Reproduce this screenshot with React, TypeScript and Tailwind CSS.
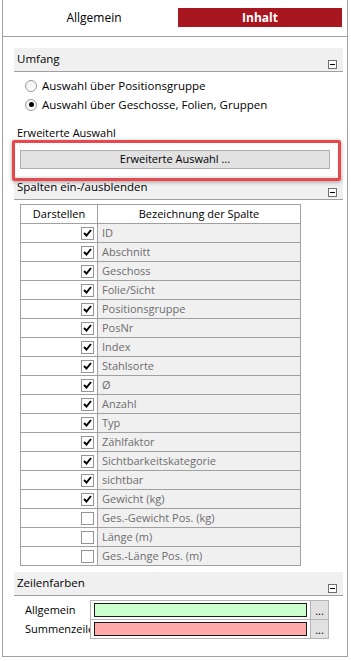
import React from 'react';

// Column list for the "Spalten ein-/ausblenden" grid
const columns: { label: string; on: boolean }[] = [
  { label: 'ID', on: true },
  { label: 'Abschnitt', on: true },
  { label: 'Geschoss', on: true },
  { label: 'Folie/Sicht', on: true },
  { label: 'Positionsgruppe', on: true },
  { label: 'PosNr', on: true },
  { label: 'Index', on: true },
  { label: 'Stahlsorte', on: true },
  { label: 'Ø', on: true },
  { label: 'Anzahl', on: true },
  { label: 'Typ', on: true },
  { label: 'Zählfaktor', on: true },
  { label: 'Sichtbarkeitskategorie', on: true },
  { label: 'sichtbar', on: true },
  { label: 'Gewicht (kg)', on: true },
  { label: 'Ges.-Gewicht Pos. (kg)', on: false },
  { label: 'Länge (m)', on: false },
  { label: 'Ges.-Länge Pos. (m)', on: false },
];

const MinusBox = () => (
  <div className="absolute right-[6px] bottom-[2px] w-[9px] h-[9px] border border-[#6e6e6e] bg-white flex items-center justify-center">
    <div className="w-[5px] h-px bg-black" />
  </div>
);

const SectionHeader = ({ title, className = '' }: { title: string; className?: string }) => (
  <div className={`relative w-[329px] h-[24px] bg-[#f0f0f0] border-b border-[#a0a0a0] flex items-center pl-[3px] text-black ${className}`}>
    <span className="-mt-[1px] text-[11.5px]">{title}</span>
    <MinusBox />
  </div>
);

const Radio = ({ checked, label }: { checked?: boolean; label: string }) => (
  <div className="h-[19px] flex items-center">
    <div className="ml-[11px] w-[12px] h-[12px] rounded-full border border-[#9a9a9a] bg-gradient-to-br from-[#f0f0f0] to-white flex items-center justify-center">
      {checked && <div className="w-[5px] h-[5px] rounded-full bg-black" />}
    </div>
    <span className="ml-[5px]">{label}</span>
  </div>
);

const CheckBox = ({ checked }: { checked: boolean }) => (
  <div className="w-[13px] h-[13px] border border-[#959595] bg-white flex items-center justify-center">
    {checked && (
      <svg width="9" height="8" viewBox="0 0 9 8">
        <path d="M1 4 L3.5 6.5 L8 1" stroke="#000" strokeWidth="1.9" fill="none" />
      </svg>
    )}
  </div>
);

const ColorRow = ({ label, color, first }: { label: string; color: string; first?: boolean }) => (
  <div className={`flex items-center ${first ? '' : '-mt-px'}`}>
    <div className="w-[70px] pl-[5px] overflow-hidden whitespace-nowrap">{label}</div>
    <div className="w-[221px] h-[20px] border border-[#b4b4b4] p-[2px] pl-[3px] pr-[3px] bg-white">
      <div className="w-full h-full border border-[#1a1a1a]" style={{ backgroundColor: color }} />
    </div>
    <div className="-ml-px w-[19px] h-[20px] border border-[#b4b4b4] bg-[#e1e1e1] flex items-end justify-center pb-[3px] text-[11px] leading-none">
      ...
    </div>
  </div>
);

export default function App() {
  return (
    <div className="relative w-[351px] h-[661px] bg-white font-['Open_Sans',sans-serif] text-[11px] text-black">
      <div className="ml-[2px] w-[346px] h-[657px] border-x border-b border-[#a0a0a0]">
        {/* Tabs */}
        <div className="h-[37px] border-b border-[#a0a0a0] flex gap-[2px] pl-[9px] pt-[8px]">
          <div className="w-[164px] h-[19px] flex items-center justify-center text-[12px]">Allgemein</div>
          <div className="w-[164px] h-[19px] bg-[#a8161f] flex items-center justify-center text-[12px] font-bold text-white">
            Inhalt
          </div>
        </div>

        <div className="pl-[11px]">
          {/* Umfang */}
          <SectionHeader title="Umfang" className="mt-[11px]" />
          <div className="mt-[4px] text-[11.5px]">
            <Radio label="Auswahl über Positionsgruppe" />
            <Radio checked label="Auswahl über Geschosse, Folien, Gruppen" />
          </div>

          {/* Erweiterte Auswahl */}
          <div className="mt-[10px] h-[18px] flex items-center pl-[3px]">Erweiterte Auswahl</div>
          <button className="mt-[8px] ml-[6px] w-[310px] h-[19px] bg-[#e1e1e1] border border-[#adadad] flex items-center justify-center">
            Erweiterte Auswahl ...
          </button>

          {/* Spalten */}
          <SectionHeader title="Spalten ein-/ausblenden" className="mt-[7px]" />
          <div className="mt-[4px] ml-[6px] w-[281px] border-t border-x border-[#a0a0a0]">
            <div className="flex h-[19px] border-b border-[#a0a0a0] bg-white">
              <div className="w-[77px] border-r border-[#a0a0a0] flex items-center justify-center">Darstellen</div>
              <div className="flex-1 flex items-center justify-center">Bezeichnung der Spalte</div>
            </div>
            {columns.map((c) => (
              <div key={c.label} className="flex h-[19px] border-b border-[#a0a0a0]">
                <div className="w-[77px] border-r border-[#a0a0a0] bg-white flex items-center justify-end pr-[3px]">
                  <CheckBox checked={c.on} />
                </div>
                <div className="flex-1 bg-[#f0f0f0] text-[#6d6d6d] flex items-center pl-[4px]">{c.label}</div>
              </div>
            ))}
          </div>

          {/* Zeilenfarben */}
          <SectionHeader title="Zeilenfarben" className="mt-[6px]" />
          <div className="mt-[4px] ml-[6px]">
            <ColorRow first label="Allgemein" color="#ccffcc" />
            <ColorRow label="Summenzeile" color="#ffaaaa" />
          </div>
        </div>
      </div>

      {/* red highlight annotation */}
      <div className="absolute left-[12px] top-[140px] w-[329px] h-[41px] border-[3px] border-[#e8474c] rounded-[2px] shadow-[0_1px_4px_rgba(0,0,0,0.35)]" />
    </div>
  );
}
